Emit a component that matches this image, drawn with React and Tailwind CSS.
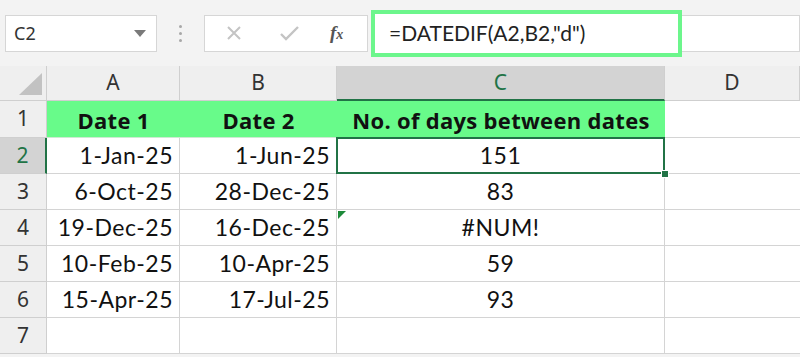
import React from 'react';

const cols = ['A', 'B', 'C', 'D'];

const rows = [
  ['1-Jan-25', '1-Jun-25', '151'],
  ['6-Oct-25', '28-Dec-25', '83'],
  ['19-Dec-25', '16-Dec-25', '#NUM!'],
  ['10-Feb-25', '10-Apr-25', '59'],
  ['15-Apr-25', '17-Jul-25', '93'],
  ['', '', ''],
];

const cellFont = { fontFamily: 'Lato, "Noto Sans", sans-serif' };
const boldFont = { fontFamily: '"Open Sans", "Noto Sans", sans-serif' };
const uiFont = { fontFamily: '"Noto Sans", "Open Sans", sans-serif' };

const App = () => {
  return (
    <div className="h-[357px] w-[800px] overflow-hidden bg-[#f3f3f3]">
      {/* formula bar */}
      <div className="flex h-[66px] items-center">
        <div className="ml-[5px] flex h-[37px] w-[152px] items-center justify-between border border-[#d6d6d6] bg-white pl-[8px] pr-[10px]">
          <span className="text-[18px] text-[#333]" style={uiFont}>C2</span>
          <svg width="12" height="7" viewBox="0 0 12 7"><path d="M0 0h12L6 7z" fill="#7a7a7a" /></svg>
        </div>
        <div className="flex w-[47px] flex-col items-center gap-[4px]">
          <span className="h-[3px] w-[3px] rounded-full bg-[#a8a8a8]" />
          <span className="h-[3px] w-[3px] rounded-full bg-[#a8a8a8]" />
          <span className="h-[3px] w-[3px] rounded-full bg-[#a8a8a8]" />
        </div>
        <div className="flex h-[37px] w-[164px] items-center border border-[#d6d6d6] bg-white">
          <svg className="ml-[21px]" width="16" height="16" viewBox="0 0 16 16">
            <path d="M2 2l12 12M14 2L2 14" stroke="#c4c4c4" strokeWidth="2" />
          </svg>
          <svg className="ml-[38px]" width="19" height="15" viewBox="0 0 19 15">
            <path d="M1 8l5 5L18 1" stroke="#c4c4c4" strokeWidth="2.4" fill="none" />
          </svg>
          <span className="ml-[31px] text-[19px] italic font-bold text-[#555]" style={{ fontFamily: '"Liberation Serif", serif' }}>
            f<span className="text-[14px]">x</span>
          </span>
        </div>
        <div className="ml-[3px] flex h-[47px] w-[311px] items-center border-[4px] border-[#6cf68c] bg-white pl-[14px]">
          <span className="text-[21px] text-[#222]" style={cellFont}>=DATEDIF(A2,B2,"d")</span>
        </div>
        <div className="h-[37px] flex-1 border-y border-r border-[#d6d6d6] bg-white" />
      </div>

      {/* sheet */}
      <div className="grid grid-cols-[47px_133px_157px_328px_135px]">
        {/* header row */}
        <div className="relative h-[35px] border-b border-r border-[#cfcfcf] bg-[#efefef]">
          <svg className="absolute left-[19px] top-[7px]" width="23" height="22" viewBox="0 0 23 22">
            <path d="M23 0V22H0z" fill="#c2c2c2" />
          </svg>
        </div>
        {cols.map(c => (
          <div
            key={c}
            className={
              c === 'C'
                ? 'flex h-[35px] items-center justify-center border-b-[2px] border-r border-b-[#217346] border-r-[#cfcfcf] bg-[#d3d3d3] text-[21px] text-[#217346]'
                : 'flex h-[35px] items-center justify-center border-b border-r border-[#cfcfcf] bg-[#efefef] text-[21px] text-[#333]'
            }
            style={uiFont}
          >
            {c}
          </div>
        ))}

        {/* row 1 */}
        <div className="flex h-[37px] items-center justify-center border-b border-r border-[#cfcfcf] bg-[#efefef] text-[21px] text-[#333]" style={uiFont}>1</div>
        {['Date 1', 'Date 2', 'No. of days between dates'].map(t => (
          <div key={t} className="flex h-[37px] items-center justify-center border-b border-[#cfe9d2] bg-[#68fb8a] pt-[2px] text-[22px] font-bold tracking-[0.3px] text-[#111]" style={boldFont}>
            {t}
          </div>
        ))}
        <div className="h-[37px] border-b border-[#d4d4d4] bg-white" />

        {rows.map((r, i) => {
          const n = i + 2;
          const sel = n === 2;
          return (
            <React.Fragment key={n}>
              <div
                className={
                  sel
                    ? 'flex h-[36px] items-center justify-center border-b border-r-[2px] border-b-[#cfcfcf] border-r-[#217346] bg-[#d3d3d3] text-[21px] text-[#217346]'
                    : 'flex h-[36px] items-center justify-center border-b border-r border-[#cfcfcf] bg-[#efefef] text-[21px] text-[#333]'
                }
                style={uiFont}
              >
                {n}
              </div>
              <div className="flex h-[36px] items-center justify-end border-b border-r border-[#d4d4d4] bg-white pr-[6px] text-[23px] tracking-[0.5px] text-[#111]" style={cellFont}>{r[0]}</div>
              <div className="flex h-[36px] items-center justify-end border-b border-r border-[#d4d4d4] bg-white pr-[6px] text-[23px] tracking-[0.5px] text-[#111]" style={cellFont}>{r[1]}</div>
              <div className="relative flex h-[36px] items-center justify-center border-b border-r border-[#d4d4d4] bg-white text-[23px] tracking-[0.5px] text-[#111]" style={cellFont}>
                {r[2]}
                {sel && (
                  <>
                    <span className="absolute inset-[-1px] z-10 border-[2px] border-[#217346]" />
                    <span className="absolute bottom-[-5px] right-[-5px] z-10 h-[8px] w-[8px] border border-white bg-[#217346]" />
                  </>
                )}
                {n === 4 && (
                  <svg className="absolute left-[1px] top-[1px]" width="8" height="8" viewBox="0 0 8 8">
                    <path d="M0 0h8L0 8z" fill="#1d8a3a" />
                  </svg>
                )}
              </div>
              <div className="h-[36px] border-b border-[#d4d4d4] bg-white" />
            </React.Fragment>
          );
        })}
      </div>
    </div>
  );
};

export default App;
